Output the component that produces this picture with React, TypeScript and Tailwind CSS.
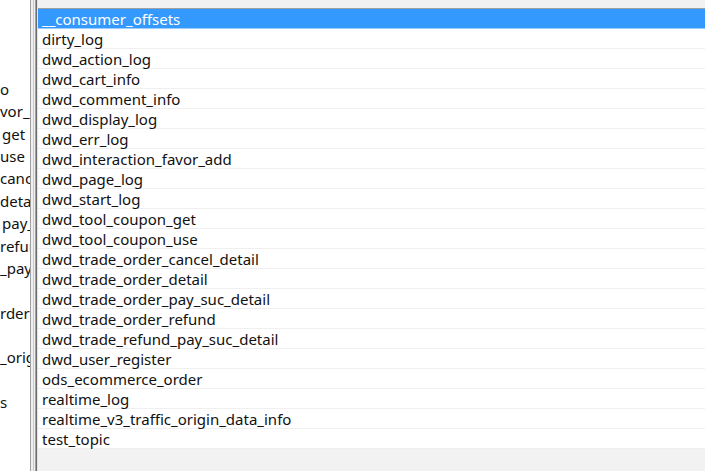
import React from "react";

const topics = [
  "__consumer_offsets",
  "dirty_log",
  "dwd_action_log",
  "dwd_cart_info",
  "dwd_comment_info",
  "dwd_display_log",
  "dwd_err_log",
  "dwd_interaction_favor_add",
  "dwd_page_log",
  "dwd_start_log",
  "dwd_tool_coupon_get",
  "dwd_tool_coupon_use",
  "dwd_trade_order_cancel_detail",
  "dwd_trade_order_detail",
  "dwd_trade_order_pay_suc_detail",
  "dwd_trade_order_refund",
  "dwd_trade_refund_pay_suc_detail",
  "dwd_user_register",
  "ods_ecommerce_order",
  "realtime_log",
  "realtime_v3_traffic_origin_data_info",
  "test_topic",
];

// clipped labels of the tree on the left (pane is scrolled sideways)
const treeBits = [
  "o",
  "vor_a",
  "get",
  "use",
  "cancel",
  "detail",
  "pay_suc",
  "refund",
  "_pay_suc",
  "",
  "rder",
  "",
  "_origin",
  "",
  "s",
];

export default function App() {
  return (
    <div
      className="flex h-[471px] w-[705px] overflow-hidden bg-white text-[15px] text-[#111]"
      style={{ fontFamily: '"Noto Sans", "Liberation Sans", sans-serif' }}
    >
      {/* left tree pane */}
      <div className="w-[30px] shrink-0 overflow-hidden bg-white pt-[78px]">
        {treeBits.map((t, i) => (
          <div
            key={i}
            className={
              i === 2 || i === 6
                ? "h-[22.36px] whitespace-nowrap pl-[2px] leading-[22px]"
                : "h-[22.36px] whitespace-nowrap leading-[22px]"
            }
          >
            {t}
          </div>
        ))}
      </div>

      {/* splitter */}
      <div className="w-px shrink-0 bg-[#a0a0a0]" />
      <div className="w-[2px] shrink-0 bg-[#f0f0f0]" />
      <div className="w-px shrink-0 bg-[#c8c8c8]" />
      <div className="w-px shrink-0 bg-[#f0f0f0]" />
      <div className="w-px shrink-0 bg-[#a0a0a0]" />
      <div className="w-px shrink-0 bg-[#6e6e6e]" />
      <div className="w-px shrink-0 bg-[#e3e3e3]" />

      {/* topic list */}
      <div className="flex min-w-0 flex-1 flex-col bg-[#f2f2f2]">
        <div className="h-[9px] shrink-0 border-b border-[#a0a0a0] bg-[#f2f2f2]" />
        <div className="flex flex-col">
          {topics.map((t, i) => (
            <div
              key={t}
              className={
                i === 0
                  ? "h-[20px] whitespace-nowrap border-b border-[#9fcdfb] bg-[#3399ff] pl-[4px] leading-[21px] text-white"
                  : "h-[20px] whitespace-nowrap border-b border-[#efefef] bg-white pl-[4px] leading-[21px]"
              }
            >
              {t}
            </div>
          ))}
        </div>
      </div>
    </div>
  );
}
